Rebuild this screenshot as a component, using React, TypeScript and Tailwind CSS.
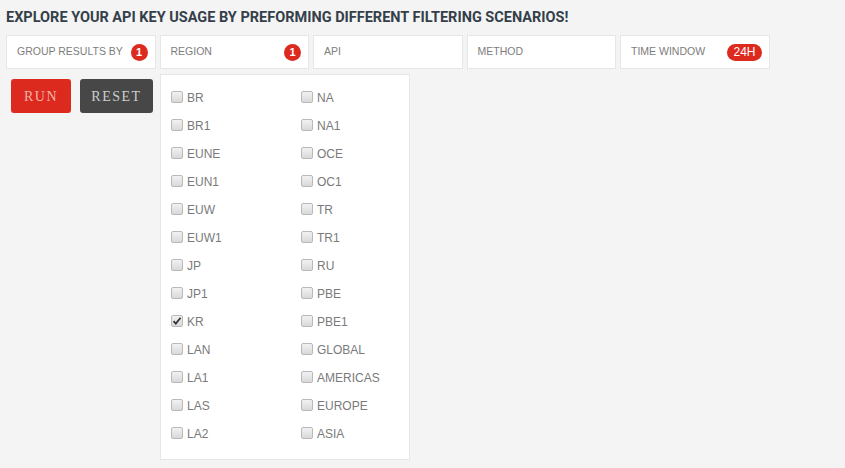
import React from "react";

const filters = [
  { label: "GROUP RESULTS BY", badge: "1" },
  { label: "REGION", badge: "1" },
  { label: "API" },
  { label: "METHOD" },
  { label: "TIME WINDOW", badge: "24H" },
];

const left = ["BR", "BR1", "EUNE", "EUN1", "EUW", "EUW1", "JP", "JP1", "KR", "LAN", "LA1", "LAS", "LA2"];
const right = ["NA", "NA1", "OCE", "OC1", "TR", "TR1", "RU", "PBE", "PBE1", "GLOBAL", "AMERICAS", "EUROPE", "ASIA"];

function Check({ label, checked }: { label: string; checked?: boolean }) {
  return (
    <div className="flex items-center h-[28px]">
      <span className="relative w-[12px] h-[12px] rounded-[2px] border border-[#b9b9b9] bg-gradient-to-b from-[#f2f2f2] to-[#d9d9d9] mr-[4px] -mt-[2px]">
        {checked && (
          <svg viewBox="0 0 12 12" className="absolute -left-px -top-px w-[12px] h-[12px]">
            <path d="M2.5 6.2 L4.8 8.6 L9.6 2.8" fill="none" stroke="#333" strokeWidth="1.8" />
          </svg>
        )}
      </span>
      <span className="text-[12px] text-[#7a7a7a]">{label}</span>
    </div>
  );
}

export default function App() {
  return (
    <div className="w-[845px] h-[468px] bg-[#f4f4f4] overflow-hidden font-['Liberation_Sans',Arial,sans-serif]">
      <h1 className="pt-[7px] pl-[6px] text-[14.5px] font-bold text-[#353f4a] font-['Roboto',sans-serif] h-[35px]">
        EXPLORE YOUR API KEY USAGE BY PREFORMING DIFFERENT FILTERING SCENARIOS!
      </h1>

      <div className="flex gap-[4px] pl-[6px]">
        {filters.map((f) => (
          <div
            key={f.label}
            className="w-[149.5px] h-[34px] bg-white border border-[#e6e6e6] flex items-center justify-between pl-[10px] pr-[7px]"
          >
            <span className="text-[10.5px] text-[#7d7d7d]">{f.label}</span>
            {f.badge &&
              (f.badge.length > 1 ? (
                <span className="h-[17px] px-[6px] rounded-full bg-[#dd2a1f] text-white text-[12px] leading-[17px]">
                  {f.badge}
                </span>
              ) : (
                <span className="w-[17px] h-[17px] rounded-full bg-[#dd2a1f] text-white text-[11px] font-bold flex items-center justify-center">
                  {f.badge}
                </span>
              ))}
          </div>
        ))}
      </div>

      <div className="flex pt-[5px]">
        <div className="flex gap-[9px] pl-[11px] pt-[5px] w-[160px] items-start">
          <button className="w-[60px] h-[34px] rounded-[3px] bg-[#dc2a1f] text-[#f3b3aa] text-[14px] tracking-[1.5px] font-['Liberation_Serif',serif]">
            RUN
          </button>
          <button className="w-[73px] h-[34px] rounded-[3px] bg-[#474747] text-[#c9d0d0] text-[14px] tracking-[1.5px] font-['Liberation_Serif',serif]">
            RESET
          </button>
        </div>
        <div className="w-[250px] h-[386px] bg-white border border-[#e6e6e6] pl-[10px] pt-[9px] flex">
          <div className="w-[130px]">
            {left.map((l) => (
              <Check key={l} label={l} checked={l === "KR"} />
            ))}
          </div>
          <div>
            {right.map((r) => (
              <Check key={r} label={r} />
            ))}
          </div>
        </div>
      </div>
    </div>
  );
}
